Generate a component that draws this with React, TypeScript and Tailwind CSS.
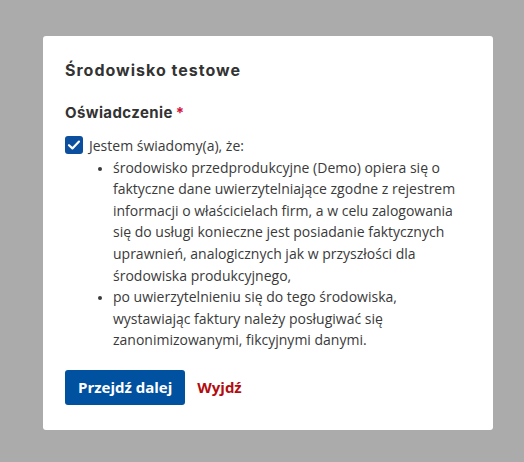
import React from "react";

const items = [
	"środowisko przedprodukcyjne (Demo) opiera się o faktyczne dane uwierzytelniające zgodne z rejestrem informacji o właścicielach firm, a w celu zalogowania się do usługi konieczne jest posiadanie faktycznych uprawnień, analogicznych jak w przyszłości dla środowiska produkcyjnego,",
	"po uwierzytelnieniu się do tego środowiska, wystawiając faktury należy posługiwać się zanonimizowanymi, fikcyjnymi danymi.",
];

function CheckIcon() {
	return (
		<svg viewBox="0 0 18 18" className="w-[18px] h-[18px] shrink-0">
			<rect x="0" y="0" width="18" height="18" rx="3" fill="#0b4f9e" />
			<path d="M4 9.2 L7.4 12.4 L14 5.6" fill="none" stroke="#fff" strokeWidth="2.2" strokeLinecap="round" strokeLinejoin="round" />
		</svg>
	);
}

export default function App() {
	return (
		<div className="w-[524px] h-[462px] bg-[#ababab] pt-[36px] pl-[43px] font-['Open_Sans',sans-serif] text-[#333]">
			<div className="w-[450px] h-[394px] bg-white rounded-[3px] px-[22px] pt-[24px]">
				<h1 className="font-['Inter',sans-serif] font-bold text-[16px] leading-[20px] tracking-[1px] text-[#333]">Środowisko testowe</h1>

				<div className="mt-[23px] font-['Inter',sans-serif] font-bold text-[15px] leading-[20px] tracking-[0.4px]">
					Oświadczenie<span className="text-[#d0103a] ml-[3px]">*</span>
				</div>

				{/* checkbox + list */}
				<div className="mt-[12px] flex items-start gap-[6px]">
					<div className="pt-[1px]">
						<CheckIcon />
					</div>
					<div className="text-[14px] leading-[21.6px] text-[#3a3a3a]">
						<div>Jestem świadomy(a), że:</div>
						<ul className="list-disc pl-[24px] w-[382px] marker:text-[11px]">
							{items.map((t, i) => (
								<li key={i}>{t}</li>
							))}
						</ul>
					</div>
				</div>

				<div className="mt-[19px] flex items-center gap-[12px]">
					<button className="h-[35px] px-[13px] rounded-[3px] bg-[#00519f] text-white font-bold text-[15px]">Przejdź dalej</button>
					<a className="text-[#b30c10] font-bold text-[15px]">Wyjdź</a>
				</div>
			</div>
		</div>
	);
}
